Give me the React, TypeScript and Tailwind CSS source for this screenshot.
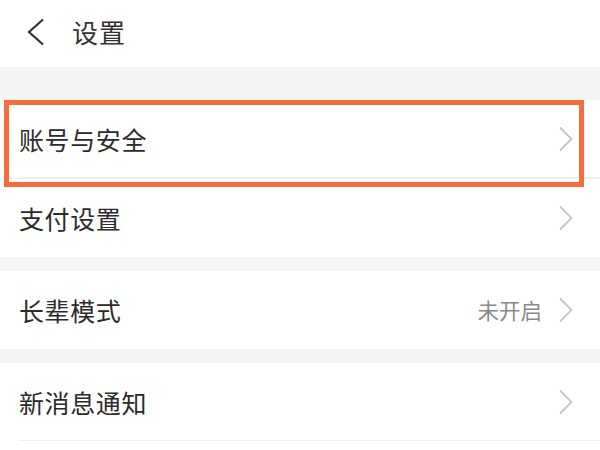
const font = { fontFamily: '"Noto Sans CJK SC", "Noto Sans", sans-serif' };

const Chevron = () => (
  <svg width="16" height="26" viewBox="0 0 16 26" fill="none" className="shrink-0">
    <path d="M2 1.5 L13.5 13 L2 24.5" stroke="#c4c4c4" strokeWidth="1.8" />
  </svg>
);

const BackArrow = () => (
  <svg width="20" height="28" viewBox="0 0 20 28" fill="none" className="shrink-0">
    <path d="M17 1.5 L3 14 L17 26.5" stroke="#333333" strokeWidth="2.2" />
  </svg>
);

type RowProps = { label: string; value?: string; divider?: boolean };

const Row = ({ label, value, divider }: RowProps) => (
  <div className="relative flex h-[78px] items-center bg-white pl-[19px] pr-[26px]">
    <span className="flex-1 text-[25px] leading-none tracking-[0.6px] text-[#2b2b2b]">{label}</span>
    {value && <span className="mr-[16px] text-[21.5px] leading-none text-[#8a8a8a]">{value}</span>}
    <Chevron />
    {divider && <div className="absolute bottom-0 left-[18px] right-0 h-px bg-[#eeeeee]" />}
  </div>
);

export default function App() {
  return (
    <div className="relative h-[450px] w-[600px] overflow-hidden bg-white" style={font}>
      <header className="flex h-[67px] items-center bg-white pb-[3px] pl-[26px]">
        <BackArrow />
        <span className="ml-[26px] text-[26px] leading-none tracking-[1px] text-[#333333]">设置</span>
      </header>
      <div className="h-[33px] bg-[#f4f4f4]" />
      <Row label="账号与安全" divider />
      <div className="h-px bg-[#f2f2f2]" />
      <Row label="支付设置" />
      <div className="h-[14px] bg-[#f4f4f4]" />
      <Row label="长辈模式" value="未开启" />
      <div className="h-[14px] bg-[#f4f4f4]" />
      <Row label="新消息通知" divider />
      <div className="h-[10px] bg-white" />

      <div className="absolute left-[4px] top-[100px] h-[87px] w-[580px] border-[5px] border-[#f86c3c]" />
    </div>
  );
}
